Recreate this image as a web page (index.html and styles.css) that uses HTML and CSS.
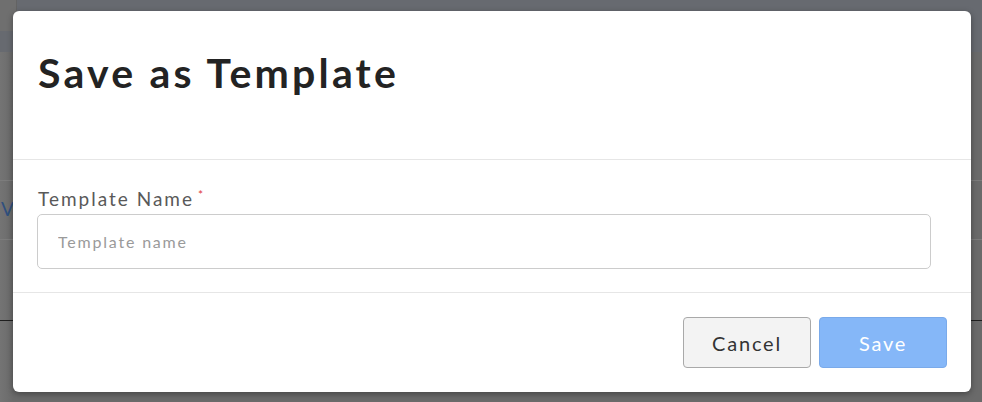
FILE: index.html
```html
<!DOCTYPE html>
<html lang="en">
<head>
<meta charset="utf-8">
<title>Save as Template</title>
<link rel="stylesheet" href="styles.css">
</head>
<body>
<div class="page">
  <div class="topbar">
    <div class="topbar-cell"></div>
  </div>
  <div class="content">
    <div class="row row-first"></div>
    <div class="row row-link"><span class="link">V</span></div>
    <div class="row row-last"></div>
  </div>
</div>

<div class="modal" role="dialog" aria-labelledby="modal-title">
  <header class="modal-header">
    <h1 id="modal-title" class="modal-title">Save as Template</h1>
  </header>
  <div class="modal-body">
    <label class="field-label" for="tpl-name">Template Name<span class="required">*</span></label>
    <input id="tpl-name" class="field-input" type="text" placeholder="Template name">
  </div>
  <footer class="modal-footer">
    <button class="btn btn-cancel" type="button">Cancel</button>
    <button class="btn btn-save" type="button">Save</button>
  </footer>
</div>
</body>
</html>
```

FILE: styles.css
```css
* {
  box-sizing: border-box;
}

html, body {
  margin: 0;
  padding: 0;
  height: 100%;
}

body {
  background: #6c6c6c;
  font-family: "Lato", "Liberation Sans", sans-serif;
  overflow: hidden;
  position: relative;
}

/* dimmed page behind the dialog */
.page {
  height: 100%;
  display: flex;
  flex-direction: column;
}

.topbar {
  height: 52px;
  background: #676a70;
  display: flex;
}

.topbar-cell {
  width: 17px;
  height: 31px;
  background: #6f6f6f;
  border-right: 1px solid #636363;
}

.content {
  flex: 1;
  background: linear-gradient(to right, #747474 0, #6a6a6a 13px, #6a6a6a 100%);
  display: flex;
  flex-direction: column;
  padding-top: 128px;
}

.row {
  border-top: 1px solid #7c7c7c;
}

.row-first {
  height: 0;
}

.row-link {
  height: 58px;
  border-top: none;
  display: flex;
  align-items: center;
  overflow: hidden;
}

.link {
  font-family: "Lato", sans-serif;
  font-size: 19px;
  color: #2f4f7e;
  padding-left: 1px;
  margin-top: -4px;
}

.row-last {
  height: 82px;
  border-top: 1px solid #7c7c7c;
  border-bottom: 1px solid #1f1f1f;
}

/* dialog */
.modal {
  position: absolute;
  left: 13px;
  top: 11px;
  width: 958px;
  height: 381px;
  background: #ffffff;
  border-radius: 6px;
  box-shadow: 0 2px 6px rgba(0, 0, 0, 0.35);
  display: flex;
  flex-direction: column;
}

.modal-header {
  padding: 38px 24px 0 24px;
  height: 150px;
  border-bottom: 1px solid #e6e6e6;
}

.modal-title {
  margin: 0;
  font-size: 41px;
  line-height: 48px;
  font-weight: 700;
  color: #232323;
  letter-spacing: 3.2px;
  padding-left: 1px;
}

.modal-body {
  padding: 24px 40px 0 24px;
  height: 134px;
  border-bottom: 1px solid #e6e6e6;
  display: flex;
  flex-direction: column;
}

.field-label {
  font-size: 19px;
  line-height: 22px;
  color: #595959;
  letter-spacing: 2px;
  padding-left: 1px;
  margin-bottom: 4px;
}

.required {
  color: #e0393e;
  font-size: 12px;
  vertical-align: 7px;
  margin-left: 4px;
}

.field-input {
  height: 55px;
  width: 100%;
  border: 1px solid #cccccc;
  border-radius: 5px;
  padding: 0 20px;
  font-family: "Lato", "Liberation Sans", sans-serif;
  font-size: 16px;
  color: #333333;
  letter-spacing: 1.8px;
  outline: none;
  background: #ffffff;
}

.field-input::placeholder {
  color: #9a9a9a;
}

.modal-footer {
  flex: 1;
  padding: 24px 24px;
  display: flex;
  justify-content: flex-end;
  gap: 8px;
}

.btn {
  width: 128px;
  height: 51px;
  border-radius: 4px;
  font-family: "Lato", "Liberation Sans", sans-serif;
  font-size: 20px;
  letter-spacing: 1.8px;
  cursor: pointer;
}

.btn-cancel {
  background: #f3f3f3;
  border: 1px solid #a9a9a9;
  color: #333333;
}

.btn-save {
  background: #85b7f8;
  border: 1px solid #7aaaea;
  color: #ffffff;
}
```
